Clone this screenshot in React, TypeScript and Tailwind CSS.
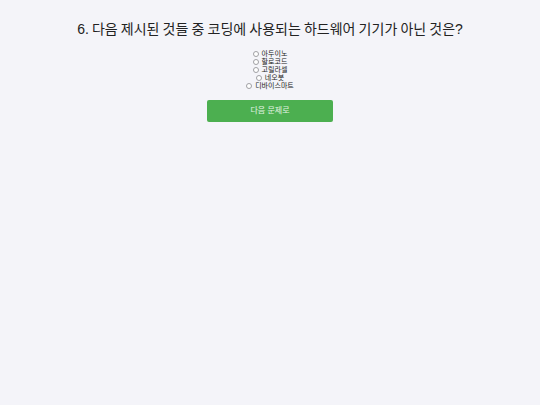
const options = ['아두이노', '할로코드', '고릴라셀', '네오봇', '디바이스마트'];

export default function App() {
  return (
    <main className="min-h-screen bg-[#f4f4f9] px-5 pt-[19px] text-center font-['Liberation_Sans','Noto_Sans_CJK_KR',sans-serif] text-[#222222]">
      <form onSubmit={(e) => e.preventDefault()}>
        <h1 id="question" className="font-['Noto_Sans_CJK_KR',sans-serif] text-[14px] leading-[18px]">
          <span className="font-['Liberation_Sans',sans-serif]">6.</span> 다음 제시된 것들 중 코딩에 사용되는 하드웨어 기기가 아닌 것은
          <span className="font-['Liberation_Sans',sans-serif]">?</span>
        </h1>
        <div role="radiogroup" aria-labelledby="question" className="mt-3 flex flex-col items-center">
          {options.map((option) => (
            <label key={option} className="flex items-center gap-[3px] text-[7px] leading-[8px]">
              <input
                type="radio"
                name="answer"
                value={option}
                className="size-[6px] appearance-none rounded-full border border-[#a0a0a4] bg-white checked:bg-[#0075ff]"
              />
              {option}
            </label>
          ))}
        </div>
        <button
          type="submit"
          className="mt-[10px] h-[22px] w-[126px] rounded-[2px] bg-[#4caf50] text-[8px] leading-[10px] text-white/85"
        >
          다음 문제로
        </button>
      </form>
    </main>
  );
}
